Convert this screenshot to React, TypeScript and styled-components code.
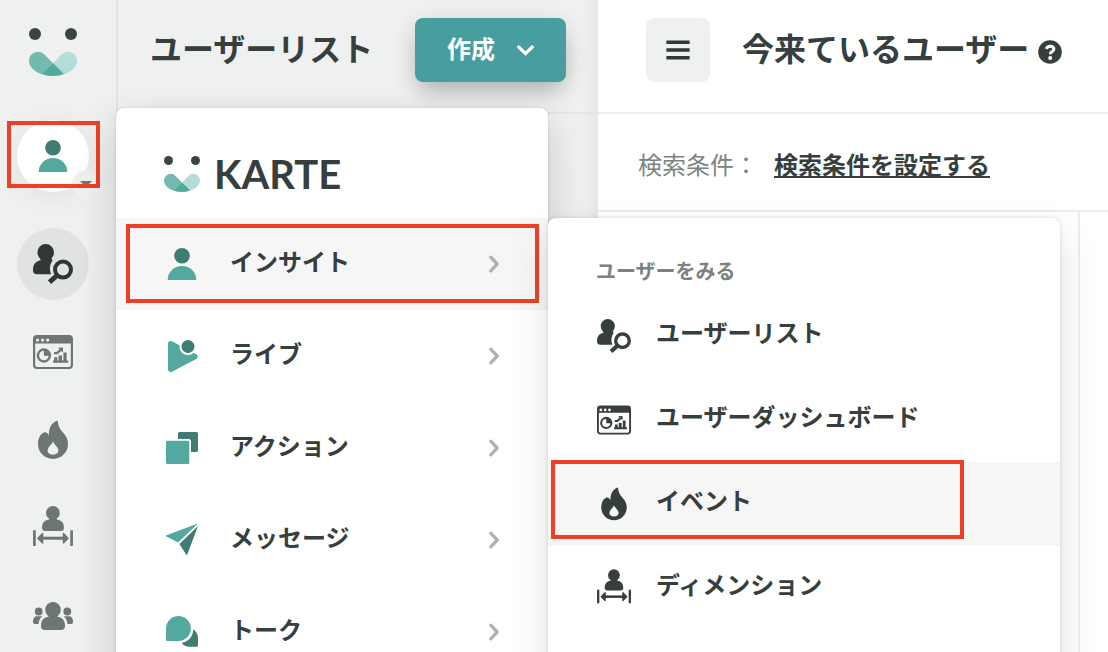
import React from "react";
import styled, { createGlobalStyle, css } from "styled-components";

const ink = "#363f3d";
const muted = "#6d7674";
const teal = "#53a99d";
const tealDark = "#3f7d74";
const surface = "#eff1f1";
const line = "#ededed";

const GlobalStyle = createGlobalStyle`
  * { box-sizing: border-box; }
  body {
    margin: 0;
    background: #fff;
    color: ${ink};
    font-family: "Noto Sans CJK JP", "Noto Sans", sans-serif;
  }
  ul { list-style: none; margin: 0; padding: 0; }
  h1, h2, h3, p { margin: 0; }
  button { font: inherit; color: inherit; border: 0; padding: 0; background: none; cursor: pointer; }
  svg { display: block; flex: none; overflow: visible; }
`;

const Page = styled.div`
  position: relative;
  display: flex;
  height: 100vh;
  overflow: hidden;
`;

const Sidebar = styled.nav`
  flex: none;
  width: 118px;
  border-right: 2px solid #e2e4e4;
  background: ${surface};
  display: flex;
  flex-direction: column;
  align-items: center;
  padding-right: 10px;
`;

const SidebarLogo = styled.a`
  display: flex;
  align-items: center;
  height: 104px;
  margin-bottom: 16px;
`;

const SidebarList = styled.ul`
  display: flex;
  flex-direction: column;
  gap: 16px;
  margin-top: 36px;
`;

const RoundButton = styled.button<{ $tone?: "white" | "grey" }>`
  position: relative;
  display: flex;
  align-items: center;
  justify-content: center;
  flex: none;
  width: 72px;
  height: 72px;
  border-radius: 50%;
  color: ${(p) => (p.$tone === "grey" ? "#2f3836" : muted)};
  background: ${(p) =>
    p.$tone === "white" ? "#fff" : p.$tone === "grey" ? "#e1e3e2" : "transparent"};
  ${(p) =>
    p.$tone === "white" &&
    css`
      box-shadow: 0 4px 28px rgba(0, 0, 0, 0.07);
    `}
`;

const CaretBadge = styled.span`
  position: absolute;
  right: -11px;
  bottom: -6px;
  width: 28px;
  height: 28px;
  border-radius: 50%;
  background: ${surface};
  display: flex;
  align-items: center;
  justify-content: center;
`;

const ListColumn = styled.section`
  flex: none;
  width: 480px;
  background: ${surface};
  box-shadow: inset -20px 0 20px -20px rgba(0, 0, 0, 0.08);
`;

const Header = styled.header<{ $line: string; $left: number }>`
  display: flex;
  align-items: center;
  height: 114px;
  padding: 0 32px 12px ${(p) => p.$left}px;
  border-bottom: 2px solid ${(p) => p.$line};
`;

const Title = styled.h1`
  font-size: 32px;
  line-height: 48px;
  font-weight: 700;
  white-space: nowrap;
  padding-bottom: 6px;
`;

const CreateButton = styled.button`
  display: flex;
  align-items: center;
  gap: 22px;
  height: 64px;
  margin-left: auto;
  padding: 0 32px;
  border-radius: 8px;
  background: #489e9e;
  color: #fff;
  font-size: 24px;
  line-height: 36px;
  font-weight: 700;
  box-shadow: 0 12px 24px -4px rgba(0, 0, 0, 0.26), 0 2px 24px rgba(0, 0, 0, 0.06);
`;

const ButtonText = styled.span`
  padding-bottom: 4px;
`;

const Main = styled.main`
  flex: 1;
  min-width: 0;
  display: flex;
  flex-direction: column;
  background: #fff;
`;

const MenuButton = styled.button`
  display: flex;
  align-items: center;
  justify-content: center;
  flex: none;
  width: 64px;
  height: 64px;
  margin-right: 32px;
  border-radius: 8px;
  background: ${surface};
`;

const HelpButton = styled.button`
  margin-left: 8px;
  padding-top: 4px;
`;

const SearchBar = styled.div`
  display: flex;
  align-items: center;
  gap: 16px;
  height: 98px;
  padding: 4px 40px 0;
  border-bottom: 2px solid ${line};
  font-size: 24px;
  line-height: 36px;
  white-space: nowrap;
`;

const SearchLabel = styled.span`
  color: #7b8381;
`;

const SearchLink = styled.a`
  color: ${ink};
  font-weight: 700;
  text-decoration: underline;
  text-decoration-thickness: 2px;
  text-underline-offset: 2px;
  text-decoration-skip-ink: none;
`;

const MainBody = styled.div`
  flex: 1;
  margin-right: 28px;
  border-right: 2px solid ${line};
`;

const Panel = styled.div`
  position: absolute;
  background: #fff;
  border-radius: 8px;
  padding-bottom: 48px;
`;

const ProductMenu = styled(Panel)`
  top: 108px;
  left: 116px;
  width: 432px;
  box-shadow: 0 0 3px rgba(0, 0, 0, 0.14), 0 16px 40px rgba(0, 0, 0, 0.18);
`;

const SubMenu = styled(Panel)`
  top: 218px;
  left: 548px;
  width: 512px;
  box-shadow: 0 0 4px rgba(0, 0, 0, 0.14), 0 16px 40px rgba(0, 0, 0, 0.12);
`;

const Brand = styled.a`
  display: flex;
  align-items: center;
  gap: 14px;
  height: 110px;
  padding: 22px 48px 0;
  color: ${ink};
  text-decoration: none;
`;

const BrandName = styled.span`
  font-family: Lato, "Liberation Sans", sans-serif;
  font-size: 40px;
  line-height: 40px;
  font-weight: 700;
`;

const MenuRow = styled.button<{ $active?: boolean; $sub?: boolean }>`
  display: flex;
  align-items: center;
  width: 100%;
  height: ${(p) => (p.$sub ? 84 : 92)}px;
  padding: 0 48px 0 ${(p) => (p.$sub ? 48 : 50)}px;
  gap: ${(p) => (p.$sub ? 24 : 32)}px;
  background: ${(p) => (p.$active ? "#f6f6f6" : "transparent")};
  font-size: 24px;
  line-height: 36px;
  font-weight: 700;
  text-align: left;
`;

const RowText = styled.span<{ $sub?: boolean }>`
  flex: 1;
  padding-bottom: ${(p) => (p.$sub ? 8 : 6)}px;
`;

const IconSlot = styled.span`
  display: flex;
  justify-content: center;
  width: 36px;
`;

const MenuItem = styled.li`
  position: relative;
`;

const SubMenuTitle = styled.h2`
  height: 76px;
  padding: 36px 48px 0;
  font-size: 20px;
  line-height: 34px;
  font-weight: 700;
  color: #7b8381;
`;

const Marker = styled.span<{ $top: number; $left: number; $width: number; $height: number }>`
  position: absolute;
  top: ${(p) => p.$top}px;
  left: ${(p) => p.$left}px;
  width: ${(p) => p.$width}px;
  height: ${(p) => p.$height}px;
  border: 4px solid #ee4026;
  pointer-events: none;
`;

type IconProps = { size?: number };

const FaceLogo = ({ size = 48 }: IconProps) => (
  <svg width={size} height={size} viewBox="0 0 48 48" aria-hidden="true">
    <circle cx="6" cy="6" r="6" fill="#3a4442" />
    <circle cx="42" cy="6" r="6" fill="#3a4442" />
    <path d="M0 33a9 9 0 0 1 15.4-6.4L24 35.2l10.8 10.6C31.5 47.2 28 48 24 48 11 48 0 41 0 33z" fill="#71b9b1" />
    <path d="M48 33a9 9 0 0 0-15.4-6.4L24 35.2 13.2 45.8C16.5 47.2 20 48 24 48c13 0 24-7 24-15z" fill="#b4ddd8" />
    <path d="M24 35.2l10.8 10.6C31.5 47.2 28 48 24 48s-7.5-.8-10.8-2.2z" fill={teal} />
  </svg>
);

const InsightIcon = () => (
  <svg width="32" height="32" viewBox="0 0 32 32" aria-hidden="true">
    <circle cx="16" cy="7.8" r="7.8" fill={tealDark} />
    <path d="M1.700 32a14.300 14 0 0 1 28.600 0z" fill={teal} />
  </svg>
);

const LiveIcon = () => (
  <svg width="32" height="32" viewBox="0 0 32 32" aria-hidden="true">
    <path d="M4.700 3.700L29 16.600 4.700 29.300z" fill={teal} stroke={teal} strokeWidth="5.400" strokeLinejoin="round" />
    <circle cx="22" cy="6.500" r="8.600" fill="#fff" />
    <circle cx="22" cy="6.500" r="6.500" fill={tealDark} />
  </svg>
);

const ActionIcon = () => (
  <svg width="32" height="32" viewBox="0 0 32 32" aria-hidden="true">
    <rect x="12" width="20" height="20" rx="1.500" fill={tealDark} />
    <rect y="7" width="25" height="25" rx="2.500" fill="#fff" />
    <rect y="8.700" width="23.300" height="23.300" rx="1.500" fill={teal} />
  </svg>
);

const MessageIcon = () => (
  <svg width="32" height="32" viewBox="0 0 32 32" aria-hidden="true">
    <path d="M.4 11.200L30.500.1c.6-.1.8.3.3.7L12 18.600.4 12.400c-.6-.4-.6-.9 0-1.200z" fill={teal} />
    <path d="M32 2L21.300 30.600c-.3.600-.8.600-1.200 0L13.400 19.900z" fill={tealDark} />
  </svg>
);

const TalkIcon = () => (
  <svg width="32" height="32" viewBox="0 0 32 32" aria-hidden="true">
    <path d="M12.400 0a12.500 12.500 0 0 1 0 25H1.500A1.500 1.500 0 0 1 0 23.500V12.500A12.500 12.500 0 0 1 12.400 0z" fill={teal} />
    <path d="M27.200 13.300c3 2 4.800 5 4.800 8.400v7.500a1.500 1.500 0 0 1-1.500 1.500h-7c-3.500 0-6-1.300-7.700-3.800 6.600-1 11.200-6 11.400-13.600z" fill={tealDark} />
  </svg>
);

const UserSearchIcon = ({ size = 40 }: IconProps) => (
  <svg width={size} height={size} viewBox="0 0 40 40" aria-hidden="true">
    <circle cx="12.700" cy="8.400" r="8.300" fill="currentColor" />
    <path d="M7.500 13h10.200l1.800 3.600c-2.600 3.700-3.400 8.400-1.400 13.600H4c-2.600 0-4-1.400-4-4 0-6 2.500-8.600 7.500-10z" fill="currentColor" />
    <circle cx="30" cy="25.600" r="8" fill="none" stroke="currentColor" strokeWidth="4" />
    <path d="M24 31.500l-7.500 6.700" stroke="currentColor" strokeWidth="5" />
  </svg>
);

const DashboardIcon = ({ size = 40 }: IconProps) => (
  <svg width={size} height={size} viewBox="0 0 40 40" aria-hidden="true">
    <path
      fillRule="evenodd"
      fill="currentColor"
      d="M4 3h32a4 4 0 0 1 4 4v26a4 4 0 0 1-4 4H4a4 4 0 0 1-4-4V7a4 4 0 0 1 4-4zm-1.800 8.500V33a2 2 0 0 0 2 2h31.600a2 2 0 0 0 2-2V11.500zM4.500 6.500a1.600 1.600 0 1 0 0 3.200 1.600 1.600 0 0 0 0-3.200zm5.100 0a1.600 1.600 0 1 0 0 3.200 1.600 1.600 0 0 0 0-3.200zm5.100 0a1.600 1.600 0 1 0 0 3.200 1.600 1.600 0 0 0 0-3.200z"
    />
    <circle cx="10.900" cy="23.500" r="6" fill="none" stroke="currentColor" strokeWidth="2.400" />
    <path d="M10.900 18v5.700H17A6 6 0 0 0 10.900 18z" fill="currentColor" />
    <path d="M20 28.600h1.200v-3.400h3.200v3.400h1.200v-5.200h3.400v5.200h1.400V20.500h3.200v8.100h1.600v2.200H20zM30 15.400v5l-1.700-1.500-4 3.400h-3.400v-2.200h2.500l3.200-2.700-1.700-1.700z" fill="currentColor" />
  </svg>
);

const FireIcon = ({ size = 40 }: IconProps) => (
  <svg width={size} height={size} viewBox="0 0 40 40" aria-hidden="true">
    <path
      fillRule="evenodd"
      fill="currentColor"
      d="M23.600.8c.7-.3 1.200 0 1.200.8.200 4.800 2.400 7.800 5.400 11.200 3 3.300 4.800 6.400 4.800 11.200A15 15 0 0 1 5 24c0-5.300 1.700-9.300 5.600-11.300 1.400-.7 2.500-.3 3.600.4.700.5 1.300 1.600 1.600 2.900C15.700 9.500 17.400 3.600 23.600.8zM20 21.500c-.5 1.500-1.600 2.700-2.800 4.100-1.300 1.500-2.600 3.100-2.600 5 0 2.500 2.400 4.100 5.400 4.100s5.400-1.600 5.400-4.100c0-1.900-1.300-3.500-2.600-5-1.200-1.400-2.300-2.600-2.800-4.100z"
    />
  </svg>
);

const DimensionIcon = ({ size = 40 }: IconProps) => (
  <svg width={size} height={size} viewBox="0 2 40 40" aria-hidden="true">
    <circle cx="19.900" cy="6.900" r="6.900" fill="currentColor" />
    <path d="M16 12.500h8v1c4.800.8 6.900 3.300 6.900 8.300 0 2.200-1 3.200-3.200 3.200H12.300c-2.200 0-3.200-1-3.200-3.200 0-5 2.100-7.500 6.900-8.300z" fill="currentColor" />
    <path d="M1.400 24.200V40M38.600 24.200V40" stroke="currentColor" strokeWidth="2.700" />
    <path d="M8 32.200h24" stroke="currentColor" strokeWidth="3" />
    <path d="M4 32.200l5-5.200h1.300v10.400H9zM36 32.200L31 27h-1.300v10.400H31z" fill="currentColor" />
  </svg>
);

const GroupIcon = () => (
  <svg width="40" height="40" viewBox="0 0 40 40" aria-hidden="true">
    <circle cx="20" cy="13.800" r="7.800" fill="currentColor" />
    <path d="M15.500 20h9v.7C29.500 21.300 32 24.500 32 30c0 2.700-1.300 4-4 4H12c-2.700 0-4-1.300-4-4 0-5.500 2.500-8.700 7.500-9.300z" fill="currentColor" />
    <circle cx="5.700" cy="15.500" r="3.900" fill="currentColor" />
    <circle cx="34.300" cy="15.500" r="3.900" fill="currentColor" />
    <path d="M3 20.300h6.500c-2.300 1.600-3.600 4-4 7.700H2c-1.300 0-2-.7-2-2 0-3 .8-5 3-5.700zM37 20.300h-6.500c2.300 1.600 3.600 4 4 7.700H38c1.300 0 2-.7 2-2 0-3-.8-5-3-5.700z" fill="currentColor" />
  </svg>
);

const ChevronRight = () => (
  <svg width="12" height="18" viewBox="0 0 12 18" aria-hidden="true">
    <path d="M2.800 2.200L9.200 9l-6.400 6.800" fill="none" stroke="#b0b3b2" strokeWidth="3.400" strokeLinecap="round" strokeLinejoin="round" />
  </svg>
);

const ChevronDown = () => (
  <svg width="17" height="12" viewBox="0 0 17 12" aria-hidden="true">
    <path d="M1.700 3l6.800 6.600L15.300 3" fill="none" stroke="#fff" strokeWidth="3.200" strokeLinecap="round" />
  </svg>
);

const BarsIcon = () => (
  <svg width="22" height="20" viewBox="0 0 22 20" aria-hidden="true">
    <path d="M1.200 2.300h19.600M1.200 10h19.600M1.200 17.700h19.600" stroke="#2f3836" strokeWidth="3.600" strokeLinecap="square" strokeLinejoin="round" />
  </svg>
);

const HelpIcon = () => (
  <svg width="26" height="24" viewBox="-1 0 26 24" aria-hidden="true">
    <circle cx="12" cy="12" r="11.800" fill={ink} />
    <path d="M8.200 8.800C9 7.100 10.300 6.200 12.100 6.200c2.200 0 3.800 1.200 3.800 3 0 2.400-3.600 2.300-3.600 5" fill="none" stroke="#fff" strokeWidth="3" />
    <circle cx="12.200" cy="17.900" r="2" fill="#fff" />
  </svg>
);

const CaretIcon = () => (
  <svg width="12" height="6" viewBox="0 0 12 6" aria-hidden="true">
    <path d="M0 0h12L6 6z" fill={muted} />
  </svg>
);

const products = [
  { label: "インサイト", icon: <InsightIcon />, active: true },
  { label: "ライブ", icon: <LiveIcon /> },
  { label: "アクション", icon: <ActionIcon /> },
  { label: "メッセージ", icon: <MessageIcon /> },
  { label: "トーク", icon: <TalkIcon /> },
];

const userViews = [
  { label: "ユーザーリスト", icon: <UserSearchIcon size={34} /> },
  { label: "ユーザーダッシュボード", icon: <DashboardIcon size={34} /> },
  { label: "イベント", icon: <FireIcon size={34} />, active: true },
  { label: "ディメンション", icon: <DimensionIcon size={34} /> },
];

const shortcuts = [
  { label: "ユーザーリスト", icon: <UserSearchIcon />, current: true },
  { label: "ユーザーダッシュボード", icon: <DashboardIcon /> },
  { label: "イベント", icon: <FireIcon /> },
  { label: "ディメンション", icon: <DimensionIcon /> },
  { label: "セグメント", icon: <GroupIcon /> },
];

export default function App() {
  return (
    <Page lang="ja">
      <GlobalStyle />
      <Sidebar>
        <SidebarLogo href="#" aria-label="KARTE">
          <FaceLogo />
        </SidebarLogo>
        <RoundButton $tone="white" aria-label="インサイト">
          <InsightIcon />
          <CaretBadge>
            <CaretIcon />
          </CaretBadge>
          <Marker $top={1} $left={-10} $width={93} $height={67} />
        </RoundButton>
        <SidebarList>
          {shortcuts.map((s) => (
            <li key={s.label}>
              <RoundButton $tone={s.current ? "grey" : undefined} aria-label={s.label}>
                {s.icon}
              </RoundButton>
            </li>
          ))}
        </SidebarList>
      </Sidebar>

      <ListColumn>
        <Header $line="#e4e6e6" $left={32}>
          <Title>ユーザーリスト</Title>
          <CreateButton>
            <ButtonText>作成</ButtonText>
            <ChevronDown />
          </CreateButton>
        </Header>
      </ListColumn>

      <Main>
        <Header $line={line} $left={48}>
          <MenuButton aria-label="メニュー">
            <BarsIcon />
          </MenuButton>
          <Title as="h2">今来ているユーザー</Title>
          <HelpButton aria-label="ヘルプ">
            <HelpIcon />
          </HelpButton>
        </Header>
        <SearchBar>
          <SearchLabel>検索条件：</SearchLabel>
          <SearchLink href="#">検索条件を設定する</SearchLink>
        </SearchBar>
        <MainBody />
      </Main>

      <ProductMenu>
        <Brand href="#">
          <FaceLogo size={36} />
          <BrandName>KARTE</BrandName>
        </Brand>
        <ul>
          {products.map((p) => (
            <MenuItem key={p.label}>
              <MenuRow $active={p.active}>
                {p.icon}
                <RowText>{p.label}</RowText>
                <ChevronRight />
              </MenuRow>
              {p.active && <Marker $top={6} $left={10} $width={413} $height={79} />}
            </MenuItem>
          ))}
        </ul>
      </ProductMenu>

      <SubMenu>
        <SubMenuTitle>ユーザーをみる</SubMenuTitle>
        <ul>
          {userViews.map((v) => (
            <MenuItem key={v.label}>
              <MenuRow $sub $active={v.active}>
                <IconSlot>{v.icon}</IconSlot>
                <RowText $sub>{v.label}</RowText>
              </MenuRow>
              {v.active && <Marker $top={-2} $left={3} $width={413} $height={79} />}
            </MenuItem>
          ))}
        </ul>
      </SubMenu>
    </Page>
  );
}
